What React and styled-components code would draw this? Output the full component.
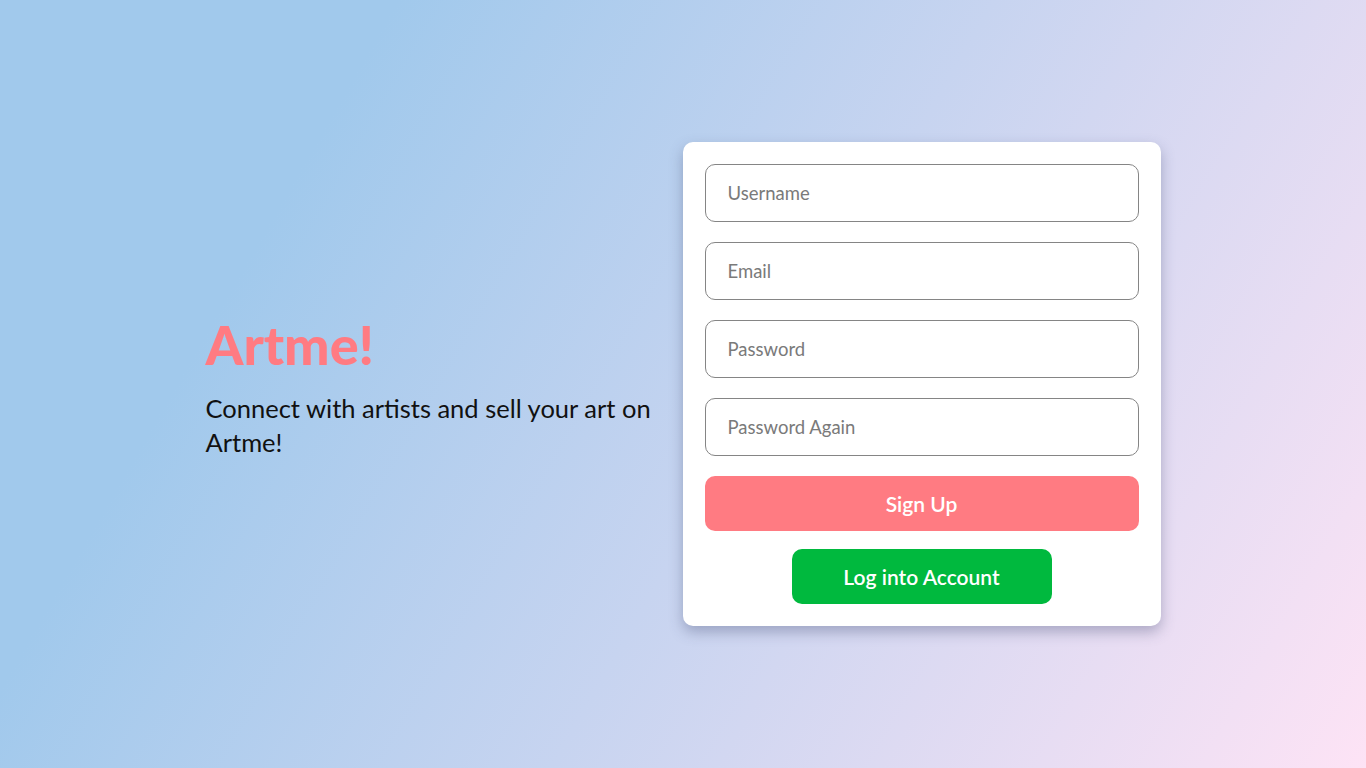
import React from 'react';
import styled, { createGlobalStyle } from 'styled-components';

const GlobalStyle = createGlobalStyle`
  html, body {
    margin: 0;
    padding: 0;
  }
  body {
    font-family: "Lato", "Open Sans", sans-serif;
  }
  * {
    box-sizing: border-box;
  }
`;

const Page = styled.div`
  width: 100vw;
  height: 100vh;
  display: flex;
  align-items: center;
  justify-content: center;
  gap: 22px;
  background: linear-gradient(120deg, #a1c9ec 22%, #c7d4f0 55%, #fde3f5 100%);
`;

const Intro = styled.div`
  width: 455px;
  padding-top: 9px;
  display: flex;
  flex-direction: column;
  gap: 19px;
`;

const Title = styled.h1`
  margin: 0;
  font-size: 54px;
  font-weight: 900;
  color: #ff7b82;
  line-height: 1;
`;

const Tagline = styled.p`
  margin: 0;
  font-size: 25.5px;
  line-height: 34px;
  color: #111;
`;

const Card = styled.form`
  width: 478px;
  padding: 22px;
  background: #fff;
  border-radius: 10px;
  box-shadow: 0 6px 14px rgba(60, 70, 110, 0.35);
  display: flex;
  flex-direction: column;
  align-items: center;
  gap: 20px;
`;

const Field = styled.input`
  width: 100%;
  height: 58px;
  padding: 0 22px;
  border: 1px solid #858585;
  border-radius: 10px;
  font-family: inherit;
  font-size: 18.5px;
  color: #333;
  outline: none;
  &::placeholder {
    color: #7a7a7a;
  }
`;

const Button = styled.button`
  width: ${p => (p.$wide ? '100%' : '260px')};
  height: 55px;
  margin-top: ${p => (p.$wide ? '0' : '-2px')};
  border: none;
  border-radius: 10px;
  background: ${p => p.$bg};
  color: #fff;
  font-family: inherit;
  font-size: 21px;
  font-weight: 600;
  cursor: pointer;
`;

const App = () => {
  return (
    <>
      <GlobalStyle />
      <Page>
        <Intro>
          <Title>Artme!</Title>
          <Tagline>Connect with artists and sell your art on Artme!</Tagline>
        </Intro>
        <Card onSubmit={e => e.preventDefault()}>
          <Field type="text" placeholder="Username" />
          <Field type="email" placeholder="Email" />
          <Field type="password" placeholder="Password" />
          <Field type="password" placeholder="Password Again" />
          <Button type="submit" $wide $bg="#ff7b82">Sign Up</Button>
          <Button type="button" $bg="#00b93e">Log into Account</Button>
        </Card>
      </Page>
    </>
  );
};

export default App;
